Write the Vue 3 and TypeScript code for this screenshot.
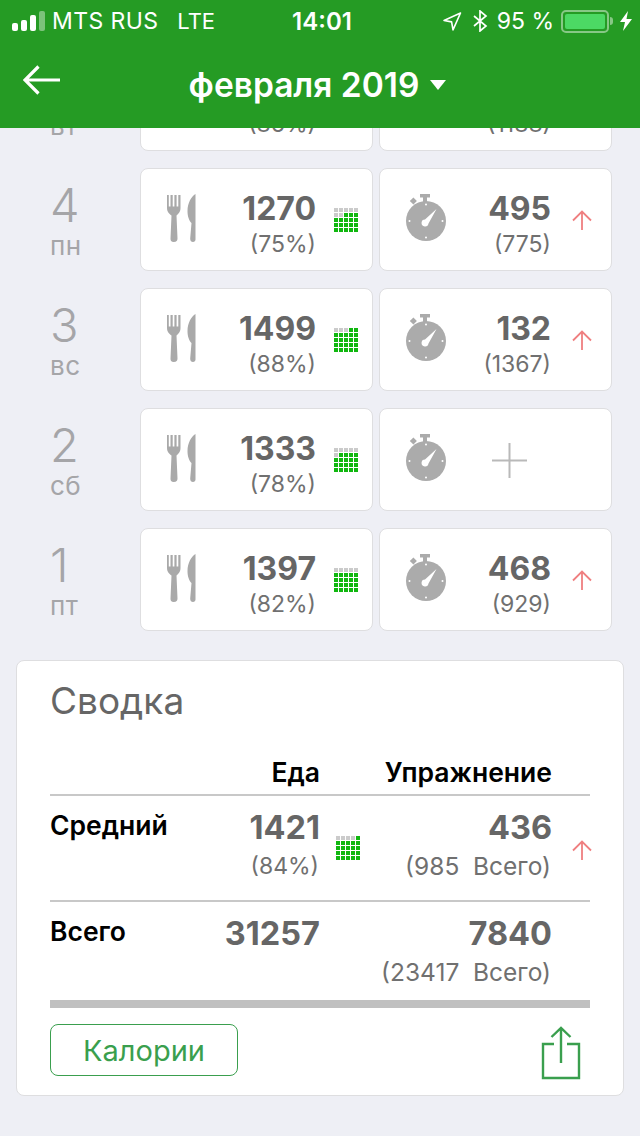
<script setup lang="ts">
interface Day {
  num: number;
  name: string;
  food: number;
  pct: number;
  burned?: number;
  rest?: number;
}

const days: Day[] = [
  { num: 5, name: 'вт', food: 1458, pct: 86, burned: 270, rest: 1188 },
  { num: 4, name: 'пн', food: 1270, pct: 75, burned: 495, rest: 775 },
  { num: 3, name: 'вс', food: 1499, pct: 88, burned: 132, rest: 1367 },
  { num: 2, name: 'сб', food: 1333, pct: 78 },
  { num: 1, name: 'пт', food: 1397, pct: 82, burned: 468, rest: 929 },
];

// 25 cells, filled from the bottom row upwards
function cells(pct: number): boolean[] {
  const filled = Math.floor((pct * 25) / 100);
  return Array.from({ length: 25 }, (_, i) => 24 - i < filled);
}
</script>

<template>
  <div class="screen">
    <header class="top">
      <div class="status">
        <div class="status-left">
          <span class="signal"><i></i><i></i><i></i><i class="dim"></i></span>
          <span class="carrier">MTS RUS</span>
          <span class="lte">LTE</span>
        </div>
        <div class="clock">14:01</div>
        <div class="status-right">
          <svg width="20" height="20" viewBox="0 0 20 20" fill="none" stroke="#fff" stroke-width="1.6" stroke-linejoin="round">
            <path d="M18.5 2 2 9.5l7.6 1.4 1.4 8z" />
          </svg>
          <svg class="bt" width="16" height="22" viewBox="0 0 16 22" fill="none" stroke="#fff" stroke-width="1.7">
            <path d="M2 6l12 10-6 5V1l6 5L2 16" />
          </svg>
          <span class="pct">95 %</span>
          <span class="battery"><b></b></span>
          <span class="nub"></span>
          <svg width="12" height="20" viewBox="0 0 12 20" fill="#fff"><path d="M8 0 0 11h5l-2 9 9-12H6.5z" /></svg>
        </div>
      </div>
      <nav class="nav">
        <button class="back" aria-label="Назад">
          <svg width="37" height="30" viewBox="0 0 37 30" fill="none" stroke="#fff" stroke-width="3.2">
            <path d="M15.500 1.500 2 15l13.500 13.500M2 15h35" />
          </svg>
        </button>
        <div class="month">февраля 2019<span class="caret"></span></div>
      </nav>
    </header>

    <main class="content">
      <div class="list">
        <div v-for="d in days" :key="d.num" class="row">
          <div class="day">
            <div class="day-num">{{ d.num }}</div>
            <div class="day-name">{{ d.name }}</div>
          </div>
          <div class="card food">
            <svg class="fork" width="29" height="48" viewBox="0 0 29 48" fill="#a9a9a9">
              <path d="M0 1h1.800v11.500h1.700V1h2.200v11.500h1.700V1h2.200v11.500h1.700V1H13.500v13c0 4-2.400 6-4 7.500l1 23c0 2-1 3.500-3.700 3.500S3.500 46.500 3.500 44.500l1-23C2.500 20 0 18 0 14z" />
              <path d="M28.500 0v45.500c0 1.500-1 2.500-2.500 2.500s-3-1-2.800-3.500l1.300-15.500C22.500 27 20.500 23 20.500 17 20.500 9 24.500 2 28.500 0z" />
            </svg>
            <div class="val">
              <div class="big">{{ d.food }}</div>
              <div class="sub">({{ d.pct }}%)</div>
            </div>
            <div class="grid-icon">
              <span v-for="(on, i) in cells(d.pct)" :key="i" :class="{ on }"></span>
            </div>
          </div>
          <div class="card sport">
            <svg class="watch" width="44" height="48" viewBox="0 0 44 48" fill="#ababab">
              <path d="M16 0h10v3.500h-3V8h-4V3.500h-3z" />
              <path d="M5.800 7l3.600-3.500 3.500 3.500-3.500 3.600z" />
              <circle cx="22" cy="27" r="20" />
              <g fill="#fff">
                <circle cx="22" cy="10.500" r="1" />
                <circle cx="22" cy="43.500" r="1" />
                <circle cx="5.500" cy="27" r="1" />
                <circle cx="38.500" cy="27" r="1" />
                <path d="M32.500 15 24.500 29.500a3.500 3.500 0 1 1-3.500-4z" />
              </g>
            </svg>
            <template v-if="d.burned">
              <div class="val">
                <div class="big">{{ d.burned }}</div>
                <div class="sub">({{ d.rest }})</div>
              </div>
              <svg class="up" width="20" height="20" viewBox="0 0 20 20" fill="none" stroke="#ef7f80" stroke-width="1.800">
                <path d="M1 10.500 10 1.500l9 9M10 1.500V20" />
              </svg>
            </template>
            <svg v-else class="plus" width="35" height="35" viewBox="0 0 35 35" stroke="#b9b9b9" stroke-width="2">
              <path d="M17.500 0v35M0 17.500h35" />
            </svg>
          </div>
        </div>
      </div>

      <section class="summary">
        <h2>Сводка</h2>
        <div class="tbl head">
          <div></div>
          <div class="col-food">Еда</div>
          <div></div>
          <div class="col-sport">Упражнение</div>
          <div></div>
        </div>
        <div class="tbl line">
          <div class="label">Средний</div>
          <div class="col-food">
            <div class="big">1421</div>
            <div class="sub">(84%)</div>
          </div>
          <div class="grid-icon">
            <span v-for="(on, i) in cells(84)" :key="i" :class="{ on }"></span>
          </div>
          <div class="col-sport">
            <div class="big">436</div>
            <div class="sub">(985&nbsp; Всего)</div>
          </div>
          <svg class="up" width="20" height="20" viewBox="0 0 20 20" fill="none" stroke="#ef7f80" stroke-width="1.800">
            <path d="M1 10.500 10 1.500l9 9M10 1.500V20" />
          </svg>
        </div>
        <div class="tbl line last">
          <div class="label">Всего</div>
          <div class="col-food">
            <div class="big">31257</div>
          </div>
          <div></div>
          <div class="col-sport">
            <div class="big">7840</div>
            <div class="sub">(23417&nbsp; Всего)</div>
          </div>
          <div></div>
        </div>
        <div class="actions">
          <button class="unit">Калории</button>
          <svg width="40" height="54" viewBox="0 0 40 54" fill="none" stroke="#3a9f4e" stroke-width="2.400">
            <path d="M13 18H2v34h36V18H26M20 2v35M10.500 11 20 2l9.500 9" />
          </svg>
        </div>
      </section>
    </main>
  </div>
</template>

<style scoped>
.screen {
  width: 640px;
  height: 1136px;
  background: #eeeff5;
  overflow: hidden;
  display: flex;
  flex-direction: column;
  font-family: Inter, "Noto Sans", sans-serif;
}

.top {
  flex: none;
  height: 128px;
  background: #259b24;
  color: #fff;
}

.status {
  height: 42px;
  padding: 0 8px 0 12px;
  display: grid;
  grid-template-columns: 1fr auto 1fr;
  align-items: center;
  font-size: 23px;
}

.status-left {
  display: flex;
  align-items: center;
}

.signal {
  display: flex;
  align-items: flex-end;
  gap: 3px;
  height: 20px;
  margin-right: 7px;
}

.signal i {
  display: block;
  width: 6px;
  border-radius: 2px;
  background: #fff;
}

.signal i:nth-child(1) { height: 8px; }
.signal i:nth-child(2) { height: 11px; }
.signal i:nth-child(3) { height: 16px; }
.signal i:nth-child(4) { height: 20px; }
.signal i.dim { background: rgba(255, 255, 255, 0.4); }

.carrier {
  letter-spacing: 0.4px;
}

.lte {
  margin-left: 19px;
  font-size: 22px;
}

.clock {
  font-size: 24px;
  font-weight: 600;
}

.status-right {
  display: flex;
  align-items: center;
  justify-content: flex-end;
}

.bt {
  margin-left: 10px;
}

.pct {
  margin-left: 9px;
}

.battery {
  margin-left: 7px;
  width: 48px;
  height: 23px;
  padding: 2px;
  border: 2px solid rgba(255, 255, 255, 0.45);
  border-radius: 5px;
  box-sizing: border-box;
  display: flex;
}

.battery b {
  flex: 1;
  background: #4cd964;
  border-radius: 2px;
}

.nub {
  width: 3px;
  height: 8px;
  margin-left: 1px;
  margin-right: 7px;
  background: rgba(255, 255, 255, 0.45);
  border-radius: 0 3px 3px 0;
}

.nav {
  height: 86px;
  padding-left: 23px;
  display: grid;
  grid-template-columns: 1fr auto 1fr;
  align-items: center;
}

.back {
  padding: 0;
  border: 0;
  background: none;
  display: flex;
  justify-self: start;
  margin-top: -10px;
}

.month {
  font-size: 33.500px;
  font-weight: 600;
  display: flex;
  align-items: center;
  margin-right: 28px;
}

.caret {
  margin-left: 11px;
  border-left: 8px solid transparent;
  border-right: 8px solid transparent;
  border-top: 10px solid #fff;
}

/* scroll view, the first row is partly scrolled under the header */
.content {
  flex: 1;
  min-height: 0;
  padding: 0 16px;
  overflow: hidden;
}

.list {
  margin-top: -80px;
}

.row {
  display: flex;
  height: 103px;
  margin-bottom: 17px;
  gap: 6px;
}

.day {
  width: 120px;
  padding-left: 34px;
  margin-right: -2px;
  color: #a5a5a8;
  box-sizing: border-box;
}

.day-num {
  font-size: 47px;
  font-weight: 300;
  line-height: 50px;
  margin-top: 12px;
}

.day-name {
  font-size: 26px;
  letter-spacing: 0.5px;
  line-height: 26px;
  margin-top: 3px;
}

.card {
  width: 233px;
  height: 103px;
  box-sizing: border-box;
  background: #fff;
  border: 1px solid #dedee0;
  border-radius: 8px;
  display: flex;
  align-items: center;
  padding-left: 26px;
}

.fork,
.watch {
  flex: none;
  margin-bottom: 3px;
}

.watch {
  margin-left: -2px;
}

.val {
  margin-left: auto;
  margin-top: 10px;
  text-align: right;
}

.big {
  font-size: 32px;
  font-weight: 700;
  line-height: 36px;
  color: #666;
}

.sub {
  font-size: 23px;
  line-height: 28px;
  color: #707070;
  margin-top: 3px;
}

.grid-icon {
  display: grid;
  grid-template-columns: repeat(5, 4px);
  grid-auto-rows: 4px;
  gap: 1px;
  flex: none;
}

.grid-icon span {
  background: #cbcbcb;
}

.grid-icon span.on {
  background: #10b70f;
}

.food .val {
  margin-right: 18px;
}

.food .grid-icon {
  margin-right: 14px;
  margin-top: 1px;
}

.sport .val {
  margin-right: 21px;
}

.up {
  flex: none;
}

.sport .up {
  margin-right: 19px;
  margin-top: 1px;
}

.plus {
  margin-left: 44px;
  margin-top: 2px;
}

.summary {
  margin-top: 29px;
  height: 436px;
  box-sizing: border-box;
  background: #fff;
  border: 1px solid #dedee0;
  border-radius: 8px;
  padding: 0 33px;
}

.summary h2 {
  margin: 0;
  padding-top: 18px;
  font-size: 37px;
  font-weight: 400;
  line-height: 44px;
  color: #666;
}

.tbl {
  display: grid;
  grid-template-columns: 120px 150px 42px 190px 38px;
}

.head {
  margin-top: 34px;
  height: 37px;
  font-size: 26.500px;
  font-weight: 600;
  line-height: 30px;
  color: #000;
  border-bottom: 2px solid #c8c8c8;
  box-sizing: content-box;
}

.col-food,
.col-sport {
  text-align: right;
}

.line {
  height: 106px;
  padding-top: 14px;
  box-sizing: border-box;
  border-bottom: 2px solid #c8c8c8;
}

.line.last {
  border-bottom: 8px solid #c0c0c0;
}

.label {
  font-size: 26.500px;
  font-weight: 600;
  line-height: 36px;
  color: #000;
  margin-top: -3px;
  white-space: nowrap;
}

.line .grid-icon {
  margin: 26px 0 0 16px;
}

.line .up {
  margin: 30px 0 0 20px;
}

.line .big {
  font-size: 32.500px;
}

.line .sub {
  margin-top: 6px;
  margin-right: 1px;
}

.line .col-sport .sub {
  font-size: 24.500px;
}

.actions {
  margin-top: 16px;
  display: flex;
  justify-content: space-between;
  align-items: flex-start;
}

.actions svg {
  margin-right: 9px;
  margin-top: 2px;
}

.unit {
  width: 188px;
  height: 52px;
  padding: 0;
  background: #fff;
  border: 1px solid #3a9f4e;
  border-radius: 8px;
  color: #3a9f4e;
  font-family: inherit;
  font-size: 29px;
}
</style>
